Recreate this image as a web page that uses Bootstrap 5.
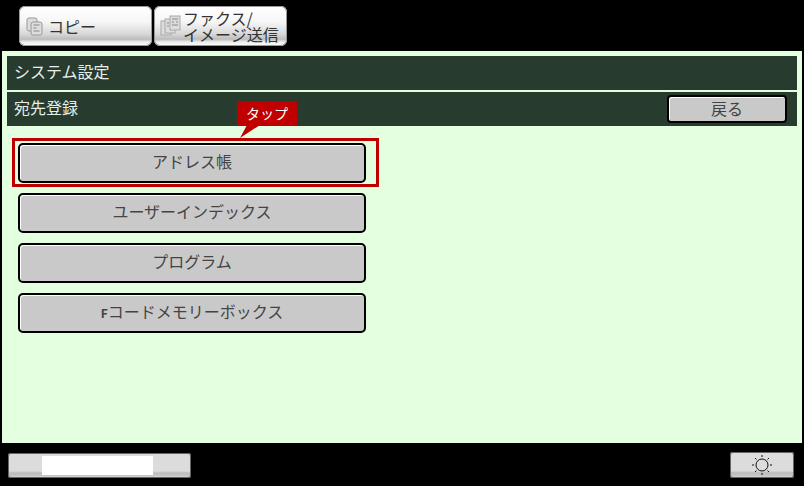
<!DOCTYPE html>
<html lang="ja">
<head>
<meta charset="utf-8">
<title>宛先登録</title>
<link href="https://cdn.jsdelivr.net/npm/bootstrap@5.3.0/dist/css/bootstrap.min.css" rel="stylesheet">
<style>
html,body{margin:0;height:486px;overflow:hidden;background:#000;}
body{font-family:"Noto Sans CJK JP","Liberation Sans",sans-serif;width:804px;}
.topzone{height:51px;padding:6px 0 0 19px;gap:2px;}
.tabkey{width:133px;height:40px;border-radius:6px;background:linear-gradient(#fff 0%,#f6f6f6 40%,#d8d8d8 70%,#bcbcbc 83%,#ededed 90%,#fff 100%);color:#333;box-shadow:inset 0 0 0 1px #999;font-size:16px;line-height:16px;}
.tabkey.first{padding-left:6px;gap:3px;}
.tabkey.second{padding-left:6px;gap:1px;}
.panelzone{height:392px;margin:0 2px;background:#e3ffdf;padding:5px;}
.barline{height:34px;background:#273b2f;color:#e8efe8;font-size:16px;padding:0 7px;margin-bottom:2px;}
.barline>.bartext{margin-top:-5px;}
.barline.second{padding-right:10px;}
.backkey{width:120px;height:28px;border:2px solid #000;border-radius:4px;background:#c9c9c9;color:#444;font-size:16px;padding-bottom:2px;box-shadow:inset 1px 1px 0 #fff;}
.listzone{padding:15px 0 0 11px;width:359px;gap:10px;}
.menukey{width:348px;height:40px;border:2px solid #000;border-radius:5px;background:#c9c9c9;color:#444;font-size:16px;padding-bottom:4px;box-shadow:inset 1px 1px 0 #fff;}
.menukey b{font-weight:700;font-size:12px;}
.redframe{position:absolute;left:12px;top:138px;width:367px;height:49px;border:3px solid #c00000;pointer-events:none;}
.redtip{position:absolute;left:237px;top:101px;width:60px;height:25px;background:#c00000;color:#fff;font-size:14px;line-height:24px;text-align:center;}
.redtail{position:absolute;left:240px;top:125px;}
.bottomzone{height:43px;padding:9px 10px 0 8px;}
.lowkey{height:26px;border-radius:3px;background:linear-gradient(#dcdcdc 0%,#dcdcdc 72%,#bcbcbc 80%,#c8c8c8 92%,#e6e6e6 100%);box-shadow:inset 0 0 0 1px #666;}
.lowkey.wide{width:183px;padding:3px 0 3px 34px;margin-top:1px;height:25px;}
.lowkey.wide span{display:block;width:111px;height:19px;background:#fff;}
.lowkey.sun{width:64px;}
</style>
</head>
<body class="position-relative">
<div class="topzone d-flex">
  <div class="tabkey first d-flex align-items-center">
    <svg width="20" height="20" viewBox="0 0 20 20" fill="#ddd" stroke="#999" stroke-width="1"><rect x="2" y="2" width="10" height="13" rx="2"/><rect x="6" y="6" width="11" height="13" rx="2"/><path d="M8.500 9h6M8.500 12h3M8.500 15h6" fill="none" stroke="#888"/></svg>
    <span>コピー</span>
  </div>
  <div class="tabkey second d-flex align-items-center">
    <svg width="22" height="22" viewBox="0 0 22 22" fill="#ddd" stroke="#aaa" stroke-width="1"><rect x="1" y="6" width="10" height="14"/><rect x="5" y="4" width="10" height="14"/><rect x="10" y="1" width="10" height="14"/><path d="M12 4h6M12 7h2M16 7h2M12 10h6M7 8h2M7 11h2" fill="none" stroke="#888"/></svg>
    <span class="text-nowrap">ファクス/<br>イメージ送信</span>
  </div>
</div>
<div class="panelzone">
  <div class="barline d-flex align-items-center"><span class="bartext">システム設定</span></div>
  <div class="barline second d-flex align-items-center justify-content-between">
    <span class="bartext">宛先登録</span>
    <div class="backkey d-flex align-items-center justify-content-center">戻る</div>
  </div>
  <div class="listzone d-flex flex-column">
    <div class="menukey d-flex align-items-center justify-content-center">アドレス帳</div>
    <div class="menukey d-flex align-items-center justify-content-center">ユーザーインデックス</div>
    <div class="menukey d-flex align-items-center justify-content-center">プログラム</div>
    <div class="menukey d-flex align-items-center justify-content-center"><span><b>F</b>コードメモリーボックス</span></div>
  </div>
</div>
<div class="bottomzone d-flex justify-content-between align-items-start">
  <div class="lowkey wide"><span></span></div>
  <div class="lowkey sun d-flex align-items-center justify-content-center">
    <svg width="22" height="22" viewBox="0 0 22 22" fill="none" stroke="#111" stroke-width="1"><circle cx="11" cy="11" r="6"/><path d="M11 1v2M11 19v2M1 11h2M19 11h2M4 4l1.500 1.500M16.500 16.500L18 18M18 4l-1.500 1.500M5.500 16.500L4 18"/></svg>
  </div>
</div>
<div class="redframe"></div>
<div class="redtip">タップ</div>
<svg class="redtail" width="22" height="14" viewBox="0 0 22 14"><path d="M0 13L7 0H20Z" fill="#c00000"/></svg>
</body>
</html>
